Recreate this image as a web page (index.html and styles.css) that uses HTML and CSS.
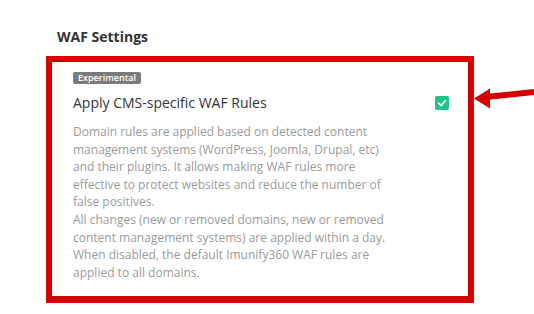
FILE: index.html
```html
<!DOCTYPE html>
<html>
<head>
<meta charset="utf-8">
<link rel="stylesheet" href="styles.css">
</head>
<body>
<div class="page">
  <h2 class="section-title">WAF Settings</h2>
  <div class="setting-box">
    <div class="badge-row"><span class="badge">Experimental</span></div>
    <div class="setting-row">
      <span class="setting-name">Apply CMS-specific WAF Rules</span>
      <span class="checkbox">
        <svg width="14" height="14" viewBox="0 0 14 14"><path d="M3.6 7.2 L6 9.4 L10.5 4.6" fill="none" stroke="#fff" stroke-width="1.7" stroke-linecap="round" stroke-linejoin="round"/></svg>
      </span>
    </div>
    <p class="setting-desc">Domain rules are applied based on detected content management systems (WordPress, Joomla, Drupal, etc) and their plugins. It allows making WAF rules more effective to protect websites and reduce the number of false positives.<br>All changes (new or removed domains, new or removed content management systems) are applied within a day. When disabled, the default Imunify360 WAF rules are applied to all domains.</p>
  </div>
  <svg class="arrow" width="64" height="30" viewBox="0 0 64 30">
    <line x1="16" y1="17" x2="64" y2="12" stroke="#d50000" stroke-width="6"/>
    <polygon points="4,18.5 20,8.5 20,28.5" fill="#d50000"/>
  </svg>
</div>
</body>
</html>
```

FILE: styles.css
```css
html, body {
  margin: 0;
  padding: 0;
  background: #fff;
}
body {
  font-family: "Open Sans", "Liberation Sans", sans-serif;
}
.page {
  position: relative;
  width: 534px;
  height: 314px;
  padding-top: 27px;
  box-sizing: border-box;
}
.section-title {
  margin: 0 0 9px 57px;
  font-size: 14px;
  line-height: 20px;
  font-weight: 700;
  color: #333;
}
.setting-box {
  margin-left: 46px;
  width: 428px;
  box-sizing: border-box;
  border: 6px solid #d50000;
  border-bottom-width: 7px;
  padding: 10px 19px 15px 21px;
}
.badge-row {
  display: flex;
}
.badge {
  display: block;
  background: #7b7b7b;
  color: #fff;
  font-size: 9px;
  font-weight: 600;
  line-height: 12px;
  height: 12px;
  padding: 0 5px;
  border-radius: 2px;
}
.setting-row {
  display: flex;
  align-items: center;
  justify-content: space-between;
  margin-top: 9px;
}
.setting-name {
  font-size: 14px;
  line-height: 20px;
  color: #333;
}
.checkbox {
  width: 14px;
  height: 14px;
  border-radius: 2px;
  background: #1fc48a;
  display: flex;
}
.setting-desc {
  margin: 10px 0 0;
  width: 318px;
  font-size: 12px;
  line-height: 17.6px;
  color: #9a9a9a;
}
.arrow {
  position: absolute;
  left: 470px;
  top: 80px;
}
```
